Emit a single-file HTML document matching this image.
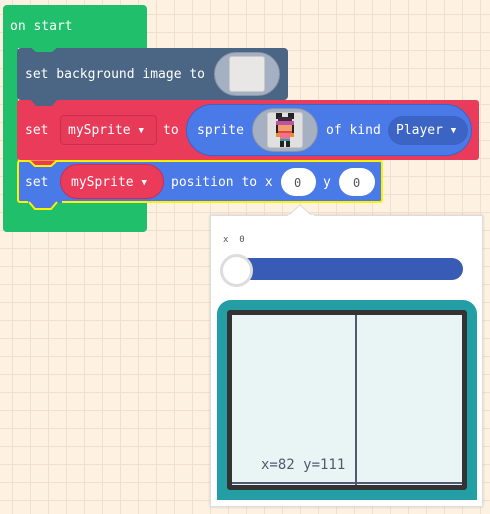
<!DOCTYPE html>
<html><head><meta charset="utf-8"><style>
body{margin:0;width:490px;height:514px;overflow:hidden;position:relative;
background-color:#fdf1e2;
background-image:linear-gradient(to right,#efdfcf 1px,transparent 1px),linear-gradient(to bottom,#efdfcf 1px,transparent 1px);
background-size:18px 18px;background-position:12px 14px;
font-family:"DejaVu Sans Mono","Liberation Mono",monospace;font-size:13px;color:#fff;}
.a{position:absolute;box-sizing:border-box;}
.t{position:absolute;white-space:nowrap;line-height:16px;}
.ar{font-size:9px;vertical-align:1px;}
</style></head><body>
<div class="a" style="left:3px;top:5px;width:144px;height:43px;background:#20bf6b;border-radius:4px 4px 0 0;"></div>
<div class="a" style="left:3px;top:40px;width:15px;height:192px;background:#20bf6b;border-radius:0 0 0 4px;"></div>
<div class="a" style="left:3px;top:200px;width:144px;height:32px;background:#20bf6b;border-radius:0 0 4px 4px;"></div>
<div class="t" style="left:10px;top:19px;">on start</div>
<div class="a" style="left:17px;top:48px;width:271px;height:52px;background:#4b6584;border-radius:4px;"></div>
<svg class="a" style="left:30px;top:47px" width="30" height="6"><path d="M0 0 L6 5 L22 5 L28 0Z" fill="#20bf6b"/></svg>
<div class="t" style="left:25px;top:67px;">set background image to</div>
<div class="a" style="left:214px;top:52px;width:66px;height:44px;background:#a5b1c2;border-radius:22px;border:1px solid #8795a8;"></div>
<div class="a" style="left:229px;top:56px;width:36px;height:36px;background:#e9e6e6;border:1px solid #c9c9c9;border-radius:3px;"></div>
<div class="a" style="left:17px;top:100px;width:462px;height:60px;background:#eb3b5a;border-radius:3px;"></div>
<svg class="a" style="left:30px;top:99px" width="30" height="8"><path d="M0 0 L6 7 L22 7 L28 0Z" fill="#4b6584"/></svg>
<div class="t" style="left:25px;top:123px;">set</div>
<div class="a" style="left:60px;top:115px;width:97px;height:30px;border:1px solid #c92f4a;border-radius:4px;background:#e63a58;"></div>
<div class="t" style="left:68px;top:123px;">mySprite <span class="ar">▼</span></div>
<div class="t" style="left:163px;top:123px;">to</div>
<div class="a" style="left:186px;top:104px;width:286px;height:52px;background:#4a79e8;border:1px solid #3a64c7;border-radius:26px;"></div>
<div class="t" style="left:197px;top:123px;">sprite</div>
<div class="a" style="left:252px;top:108px;width:66px;height:44px;background:#a5b1c2;border-radius:22px;border:1px solid #8795a8;"></div>
<div class="a" style="left:267px;top:112px;width:36px;height:36px;background:#e0e0e0;border:1px solid #c9c9c9;border-radius:3px;"></div>
<svg class="a" style="left:272px;top:113px" width="26" height="34" viewBox="0 0 13 17">
<rect x="2" y="0" width="3" height="3" fill="#222"/><rect x="8" y="0" width="3" height="3" fill="#222"/>
<rect x="3" y="2" width="7" height="3" fill="#3a2a3a"/><rect x="2" y="4" width="9" height="2" fill="#c050a0"/>
<rect x="3" y="6" width="7" height="3" fill="#f0a070"/><rect x="2" y="6" width="1" height="5" fill="#222"/><rect x="10" y="6" width="1" height="5" fill="#222"/>
<rect x="3" y="9" width="7" height="1" fill="#e04a40"/><rect x="4" y="10" width="5" height="3" fill="#f07090"/>
<rect x="2" y="10" width="2" height="2" fill="#f08a30"/><rect x="9" y="10" width="2" height="2" fill="#f08a30"/>
<rect x="4" y="13" width="5" height="1" fill="#30a0a0"/><rect x="4" y="14" width="2" height="3" fill="#222"/><rect x="7" y="14" width="2" height="3" fill="#222"/></svg>
<div class="t" style="left:326px;top:123px;">of kind</div>
<div class="a" style="left:388px;top:116px;width:80px;height:29px;background:#3b64c4;border-radius:15px;"></div>
<div class="t" style="left:396px;top:123px;">Player <span class="ar">▼</span></div>
<div class="a" style="left:17px;top:160px;width:366px;height:43px;background:#4a79e8;border:2px solid #fff200;border-radius:3px;"></div>
<svg class="a" style="left:28px;top:159px" width="34" height="52"><path d="M1 1.5 L7 7 L23 7 L29 1.5" fill="#eb3b5a" stroke="#fff200" stroke-width="2"/><rect x="0" y="40" width="34" height="4" fill="#4a79e8"/><path d="M1 43 L7 50 L23 50 L29 43" fill="#4a79e8" stroke="#fff200" stroke-width="2"/></svg>
<div class="t" style="left:25px;top:175px;">set</div>
<div class="a" style="left:60px;top:164px;width:104px;height:35px;background:#eb3b5a;border:1px solid #c92f4a;border-radius:18px;"></div>
<div class="t" style="left:71px;top:175px;">mySprite <span class="ar">▼</span></div>
<div class="t" style="left:171px;top:175px;">position to x</div>
<div class="a" style="left:281px;top:168px;width:35px;height:28px;background:#fff;border-radius:14px;"></div>
<div class="t" style="left:294px;top:175px;color:#555;font-size:12px;">0</div>
<div class="t" style="left:323px;top:175px;">y</div>
<div class="a" style="left:339px;top:168px;width:36px;height:28px;background:#fff;border-radius:14px;"></div>
<div class="t" style="left:353px;top:175px;color:#555;font-size:12px;">0</div>
<div class="a" style="left:210px;top:215px;width:273px;height:292px;background:#fff;border:1px solid #ddd;box-shadow:0 0 3px rgba(0,0,0,.15);"></div>
<svg class="a" style="left:288px;top:205px" width="26" height="12"><path d="M0 11 L12 0 L24 11Z" fill="#fff" stroke="#ddd"/><rect x="0" y="10" width="26" height="3" fill="#fff"/></svg>
<div class="t" style="left:223px;top:232px;color:#555;font-size:9px;">x&nbsp;&nbsp;0</div>
<div class="a" style="left:223px;top:258px;width:240px;height:22px;background:#385cb5;border-radius:11px;"></div>
<div class="a" style="left:220px;top:254px;width:33px;height:33px;background:#fff;border:3px solid #ddd;border-radius:50%;"></div>
<div class="a" style="left:217px;top:300px;width:260px;height:200px;background:#239ea5;border-radius:14px 14px 0 0;"></div>
<div class="a" style="left:227px;top:310px;width:240px;height:180px;background:#e9f5f5;border:5px solid #333;border-radius:3px;"></div>
<div class="a" style="left:355px;top:315px;width:2px;height:170px;background:#505a70;"></div>
<div class="a" style="left:232px;top:482px;width:230px;height:2px;background:#505a70;"></div>
<div class="t" style="left:261px;top:457px;color:#505a70;font-size:14px;font-family:'DejaVu Sans Mono',monospace;">x=82 y=111</div>
</body></html>
